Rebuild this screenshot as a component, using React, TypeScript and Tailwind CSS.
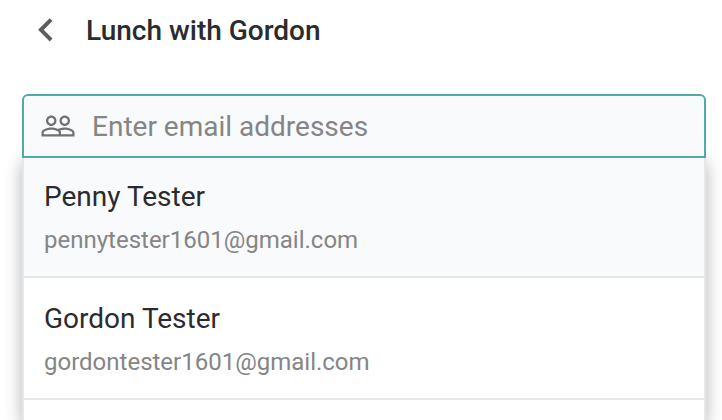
import { useState } from "react";

type Contact = {
  name: string;
  email: string;
};

const contacts: Contact[] = [
  { name: "Penny Tester", email: "pennytester1601@gmail.com" },
  { name: "Gordon Tester", email: "gordontester1601@gmail.com" },
];

export default function App() {
  const [value, setValue] = useState("");
  const [active, setActive] = useState(0);

  return (
    <div className="flex h-screen flex-col overflow-hidden bg-white font-['Roboto',sans-serif] text-[#2b2b2f]">
      <header className="flex h-[62px] shrink-0 items-center gap-6 px-[30px]">
        <button
          type="button"
          aria-label="Back"
          className="flex size-8 items-center justify-center text-[#5c5d60]">
          <svg viewBox="0 0 32 32" className="size-8" fill="currentColor">
            <path d="M19.7 3.2 22.5 6 13.7 14.8 22.5 23.6 19.7 26.4 8.1 14.8z" />
          </svg>
        </button>
        <h1 className="text-[28px] leading-8 font-medium">Lunch with Gordon</h1>
      </header>

      <main className="flex flex-1 flex-col pt-8 pr-4 pl-[22px]">
        <label className="relative z-10 flex h-16 shrink-0 items-center gap-4 rounded-t-md border-2 border-[#52a9ad] bg-[#f9fafc] px-4">
          <svg viewBox="0 0 24 24" className="size-9 shrink-0 text-[#707172]" fill="currentColor">
            <path d="M16.5 13c-1.2 0-3.07.34-4.5 1-1.43-.67-3.3-1-4.5-1C5.33 13 1 14.08 1 16.25V19h22v-2.75c0-2.17-4.33-3.25-6.5-3.25zm-4 4.5h-10v-1.25c0-.54 2.56-1.75 5-1.75s5 1.21 5 1.75v1.25zm9 0H14v-1.25c0-.46-.2-.86-.52-1.22.88-.3 1.96-.53 3.02-.53 2.44 0 5 1.21 5 1.75v1.25zM7.5 12c1.93 0 3.5-1.57 3.5-3.5S9.43 5 7.5 5 4 6.57 4 8.5 5.57 12 7.5 12zm0-5.5c1.1 0 2 .9 2 2s-.9 2-2 2-2-.9-2-2 .9-2 2-2zm9 5.5c1.93 0 3.5-1.57 3.5-3.5S18.43 5 16.5 5 13 6.57 13 8.5s1.57 3.5 3.5 3.5zm0-5.5c1.1 0 2 .9 2 2s-.9 2-2 2-2-.9-2-2 .9-2 2-2z" />
          </svg>
          <input
            type="text"
            aria-label="Enter email addresses"
            placeholder="Enter email addresses"
            value={value}
            onChange={(e) => setValue(e.target.value)}
            className="min-w-0 flex-1 bg-transparent pt-0.5 text-[28px] leading-8 outline-none placeholder:text-[#858585]"
          />
        </label>

        {/* tucked under the field's bottom border */}
        <ul className="-mt-0.5 flex-1 border-x-2 border-[#e4e8eb] bg-white shadow-[0_6px_16px_rgba(0,0,0,0.3)]">
          {contacts.map((contact, i) => (
            <li key={contact.email} className="border-b-2 border-[#e4e8eb]">
              <button
                type="button"
                onMouseEnter={() => setActive(i)}
                className={`flex h-[120px] w-full flex-col gap-[11px] px-5 pt-[25px] text-left ${
                  i === active ? "bg-[#f9fafc]" : "bg-white"
                }`}>
                <span className="text-[28px] leading-8">{contact.name}</span>
                <span className="text-2xl leading-8 text-[#858585]">{contact.email}</span>
              </button>
            </li>
          ))}
        </ul>
      </main>
    </div>
  );
}
